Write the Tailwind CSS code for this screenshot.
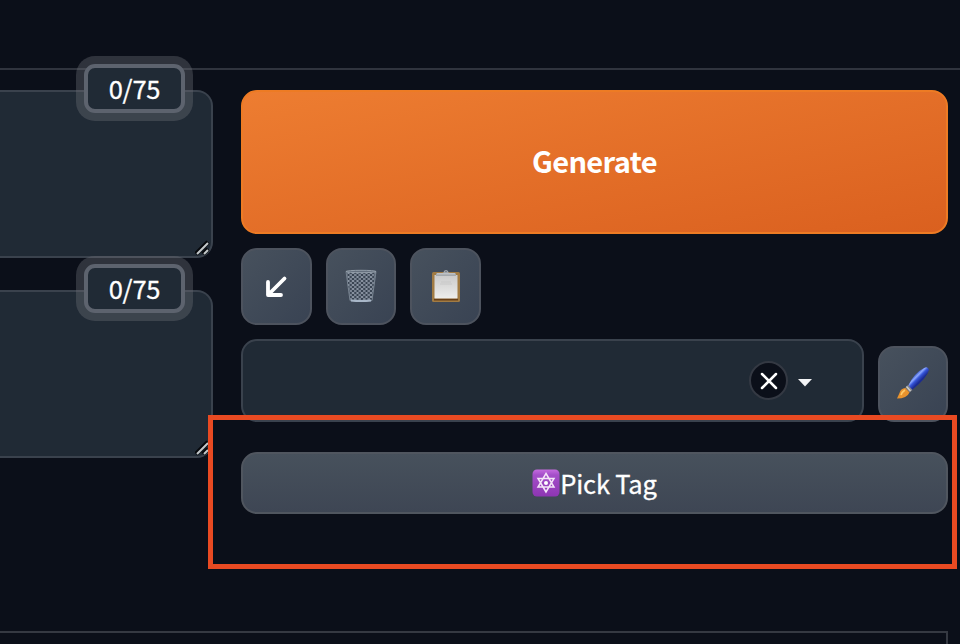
<!DOCTYPE html>
<html lang="en">
<head>
<meta charset="utf-8">
<title>Generate</title>
<script src="https://cdn.jsdelivr.net/npm/@tailwindcss/browser@4"></script>
</head>
<body class="relative h-[644px] w-[960px] overflow-hidden bg-[#0b0f19] font-['Noto_Sans_CJK_SC','Noto_Sans',sans-serif] text-white">
<div class="flex h-full flex-col">
  <header class="h-[70px] shrink-0 border-b-2 border-[#30343e]"></header>
  <main class="flex h-[561px] shrink-0 gap-7 pt-5 pr-3">
    <section class="flex w-[213px] shrink-0 flex-col gap-8">
      <div class="relative h-[168px] rounded-r-[16px] border-2 border-l-0 border-[#3a424d] bg-[#202a35]">
        <div class="absolute top-[-28px] left-[84px] flex h-[49px] w-[101px] items-center justify-center rounded-[11px] border-4 border-[#5d636e] bg-[#202a35] text-[25.5px] leading-none tracking-[-0.2px] ring-8 ring-[#6b6e77]/38 [-webkit-text-stroke:0.3px_white]"><span class="pb-px">0/75</span></div>
        <svg class="absolute right-0 bottom-0" width="16" height="16" viewBox="0 0 16 16" fill="none"><path d="M1 14 13 2M8 14l5-5" stroke="#05070b" stroke-width="4.5"/><path d="M2 14 13 3M9 14l4-4" stroke="#c3c8ca" stroke-width="2"/></svg>
      </div>
      <div class="relative h-[168px] rounded-r-[16px] border-2 border-l-0 border-[#3a424d] bg-[#202a35]">
        <div class="absolute top-[-28px] left-[84px] flex h-[49px] w-[101px] items-center justify-center rounded-[11px] border-4 border-[#5d636e] bg-[#202a35] text-[25.5px] leading-none tracking-[-0.2px] ring-8 ring-[#6b6e77]/38 [-webkit-text-stroke:0.3px_white]"><span class="pb-px">0/75</span></div>
        <svg class="absolute right-0 bottom-0" width="16" height="16" viewBox="0 0 16 16" fill="none"><path d="M1 14 13 2M8 14l5-5" stroke="#05070b" stroke-width="4.5"/><path d="M2 14 13 3M9 14l4-4" stroke="#c3c8ca" stroke-width="2"/></svg>
      </div>
    </section>
    <section class="flex w-[707px] shrink-0 flex-col">
      <button class="flex h-36 items-center justify-center rounded-[16px] border-2 border-[#ed7b24] bg-linear-to-br from-[#ed7d31] to-[#da601f] pb-[3px] text-[29px] leading-none font-bold tracking-[-0.6px]">Generate</button>
      <div class="mt-3.5 flex gap-3.5">
        <button class="flex h-[77px] w-[71px] items-center justify-center rounded-[16px] border-2 border-[#4d535e] bg-linear-to-br from-[#47515d] to-[#394353]">
          <svg class="mr-0.5" width="24" height="24" viewBox="0 0 24 24" fill="none" stroke="#fff" stroke-width="3.8" stroke-linecap="round" stroke-linejoin="round"><path d="M20.500 3.500 5 19M4 7v13h13"/></svg>
        </button>
        <button class="flex h-[77px] w-[70px] items-center justify-center rounded-[16px] border-2 border-[#4d535e] bg-linear-to-br from-[#47515d] to-[#394353]">
          <svg class="mb-px" width="34" height="34" viewBox="0 0 34 34" fill="none">
            <defs><pattern id="mesh" width="4.500" height="4" patternUnits="userSpaceOnUse"><path d="M0 0l4.500 4M4.500 0 0 4" stroke="#98a2b0" stroke-width=".9"/></pattern></defs>
            <path d="M2 2.500h30L28 31.500q-11 2-22 0z" fill="#35404e"/>
            <path d="M2 2.500h30L28 31.500q-11 2-22 0z" fill="url(#mesh)" stroke="#778390"/>
            <ellipse cx="17" cy="2.500" rx="15" ry="1.200" fill="#65707e" stroke="#949faa"/>
            <path d="M7 31.500q10 1 20 0" stroke="#a9b7c8" stroke-width="2"/>
          </svg>
        </button>
        <button class="flex h-[77px] w-[71px] items-center justify-center rounded-[16px] border-2 border-[#4d535e] bg-linear-to-br from-[#47515d] to-[#394353]">
          <svg class="mb-px" width="30" height="34" viewBox="0 0 30 34">
            <defs><linearGradient id="paper" x2="0" y2="1"><stop stop-color="#cacaca"/><stop offset="1" stop-color="#eeeeec"/></linearGradient></defs>
            <rect x="1" y="3" width="28" height="30" rx="1.500" fill="#a17b43"/><path d="M3 30.500h24" stroke="#684018" stroke-width="2"/>
            <path d="M3.500 6h23v23.500h-23z" fill="url(#paper)"/><path d="M10 13h10M9 15h12" stroke="#c1c1c0" stroke-width=".6"/>
            <path d="M5 7V5q0-1 2-1h4q2 0 2-2 2-2 4 0 0 2 2 2h4q2 0 2 1v2z" fill="#a4a9ad"/><path d="M6 4.800h18" stroke="#c8cccf"/><circle cx="15" cy="2.500" r=".8" fill="#69717a"/>
          </svg>
        </button>
      </div>
      <div class="mt-3.5 flex items-start gap-3.5">
        <div class="flex h-[83px] w-[623px] items-center justify-end gap-2.5 rounded-[16px] border-2 border-[#3a424d] bg-[#202a35] pr-[50px]">
          <button class="flex size-[39px] items-center justify-center rounded-full border-2 border-[#343943] bg-[#0b0f19]">
            <svg width="18" height="18" viewBox="0 0 18 18" stroke="#fff" stroke-width="2.500" stroke-linecap="round"><path d="m2 2 14 14M16 2 2 16"/></svg>
          </button>
          <svg class="mt-1" width="14" height="8" viewBox="0 0 14 8" fill="#f3f4f6"><path d="M0 0h14L7 7.500z"/></svg>
        </div>
        <button class="mt-[7px] flex h-[76px] w-[70px] items-center justify-center rounded-[16px] border-2 border-[#4d535e] bg-linear-to-br from-[#47515d] to-[#394353]">
          <svg class="-mt-0.5" width="34" height="34" viewBox="0 0 34 34">
            <defs><linearGradient id="handle" x1="18" y1="9" x2="24" y2="15" gradientUnits="userSpaceOnUse"><stop stop-color="#304ec0"/><stop offset=".35" stop-color="#8da8ff"/><stop offset=".6" stop-color="#3554d8"/><stop offset="1" stop-color="#1b2b91"/></linearGradient></defs>
            <path d="M12 20Q18 7 28 2q4-2 5 2-2 8-17 20z" fill="url(#handle)"/>
            <path d="m12 19 4.500 5-3 2.500-4-5z" fill="#85858a"/><path d="m10.500 20.500 4 4.500" stroke="#d4d3cc" stroke-width="1.200"/>
            <path d="M9.500 22q-5 .5-6 5l-2.500 5.500q10 0 12.500-6z" fill="#e8932e"/><path d="M9 24q-3 2-4 5" stroke="#ffca68" stroke-width="1.600" fill="none"/>
          </svg>
        </button>
      </div>
      <button class="mt-[30px] flex h-[62px] items-center justify-center rounded-[16px] border-2 border-[#50565f] bg-linear-to-b from-[#47515c] to-[#3e4654] text-[25.5px] leading-none tracking-[-0.2px] [-webkit-text-stroke:0.3px_white]">
        <svg class="mb-px" width="28" height="28" viewBox="0 0 28 28" fill="none"><defs><linearGradient id="violet" x2="0" y2="1"><stop stop-color="#c66be0"/><stop offset=".2" stop-color="#a44fc9"/><stop offset="1" stop-color="#8d35b2"/></linearGradient></defs><rect x=".5" y=".5" width="27" height="27" rx="4.500" fill="url(#violet)"/><path d="M14 4.500 22 18H6zM14 23 6 9.500h16z" stroke="#f4e5f8" stroke-width="1.500"/><circle cx="14" cy="14" r="2" fill="#fff"/></svg><span class="pb-px">Pick Tag</span>
      </button>
    </section>
  </main>
  <footer class="h-[13px] w-[948px] border-t-2 border-r-2 border-[#353942]"></footer>
</div>
<div class="pointer-events-none absolute top-[415px] left-[208px] h-[154px] w-[749px] border-5 border-[#e94a22]"></div>
</body>
</html>
